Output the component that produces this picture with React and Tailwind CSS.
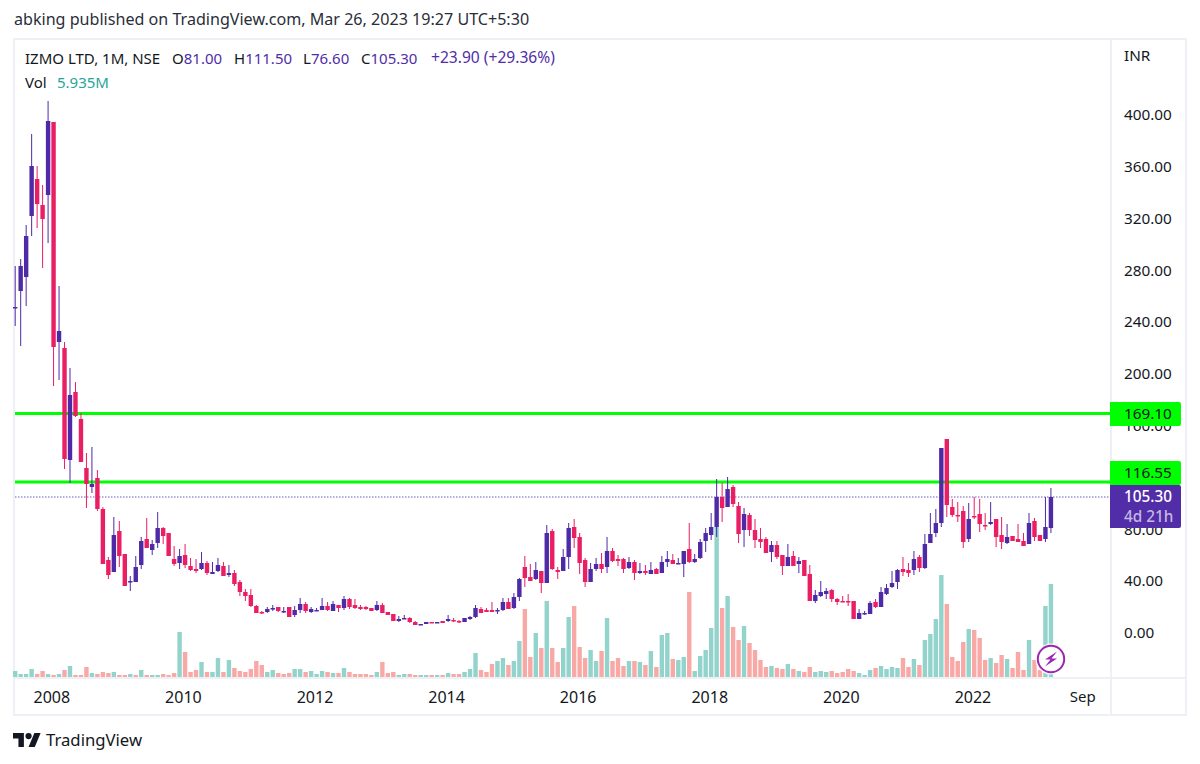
const C = [
[1,266,307,308,326],[1,259,266,291,346],[1,225,236,277,306],[1,134,166,216,236],[0,166,179,204,228],[0,185,205,219,268],[1,101,121,195,243],[0,122,122,347,386],[1,286,331,342,380],[0,342,348,459,469],
[1,368,395,460,483],[0,382,392,416,417],[0,413,419,462,462],[0,453,468,484,508],[1,447,484,487,493],[0,470,478,509,511],[0,507,509,564,564],[0,557,560,575,579],[1,517,535,572,572],[0,521,531,556,567],
[0,554,554,586,586],[1,576,581,582,591],[1,556,567,582,582],[1,537,541,565,569],[0,518,539,548,548],[1,540,544,550,555],[1,512,528,543,548],[0,527,528,536,544],[0,533,533,556,556],[0,546,559,564,566],
[1,549,556,563,569],[0,544,555,565,568],[0,558,566,570,571],[0,559,569,571,573],[1,552,563,569,570],[0,561,563,573,575],[1,562,572,574,574],[1,558,565,571,572],[0,562,566,576,576],[1,565,573,575,577],
[0,570,573,584,586],[0,580,582,592,596],[0,589,592,596,601],[0,589,595,606,607],[0,605,606,613,613],[0,611,612,613,614],[1,607,609,612,613],[1,605,608,609,611],[0,607,607,611,612],[1,607,611,612,613],
[0,607,607,617,617],[1,606,610,615,617],[1,598,604,610,613],[0,602,604,611,613],[1,607,609,612,613],[1,608,610,611,611],[1,598,606,610,610],[0,602,606,610,611],[1,601,604,611,611],[0,605,605,608,612],
[1,596,599,608,610],[0,598,599,607,609],[0,599,605,608,609],[0,605,607,609,610],[0,606,607,609,610],[0,608,608,611,611],[1,601,605,610,611],[0,603,605,613,613],[0,612,612,615,615],[0,614,614,621,621],
[1,616,619,621,622],[1,615,618,619,619],[0,617,618,622,623],[0,621,622,625,625],[1,624,624,625,625],[1,622,622,624,624],[0,622,622,623,623],[1,622,622,623,623],[0,621,621,623,623],[1,615,619,621,622],
[0,618,620,621,622],[0,620,621,622,623],[1,618,618,622,622],[1,616,617,619,620],[1,605,608,617,618],[0,607,609,613,613],[0,608,610,612,612],[0,602,610,612,612],[1,608,610,611,614],[1,598,602,610,611],
[0,598,602,609,609],[1,593,597,608,609],[1,578,579,597,601],[0,556,567,578,587],[0,564,577,581,581],[1,562,570,579,580],[0,571,571,583,593],[1,525,533,583,583],[0,529,531,569,570],[0,567,570,572,579],
[1,549,557,571,571],[1,523,528,557,569],[0,519,527,538,548],[0,533,537,563,574],[0,558,560,582,587],[1,563,569,582,582],[1,558,564,569,571],[0,553,564,569,573],[1,537,551,567,573],[0,548,551,561,562],
[0,555,559,561,566],[0,558,559,569,573],[1,557,562,568,569],[0,560,562,573,580],[1,563,571,573,574],[0,565,571,573,575],[1,562,570,574,574],[0,568,569,574,574],[1,556,562,573,573],[1,551,559,562,567],
[0,554,560,564,564],[1,558,563,564,564],[1,551,551,564,577],[0,523,549,562,563],[1,554,559,562,563],[1,539,542,558,559],[1,528,533,541,552],[1,513,527,535,540],[1,479,497,527,537],[0,483,497,508,522],
[1,477,489,507,507],[0,485,487,504,507],[0,502,506,534,543],[1,508,514,530,547],[0,513,515,530,536],[0,519,530,540,548],[0,528,539,542,548],[0,537,539,553,553],[1,541,545,552,562],[0,541,545,557,559],
[0,555,555,566,575],[1,544,557,566,566],[0,551,556,566,566],[1,557,561,564,573],[0,560,560,576,576],[0,565,574,601,601],[1,590,595,601,603],[1,581,592,596,597],[1,588,591,594,599],[0,589,590,599,602],
[0,598,599,602,605],[0,596,601,602,602],[0,594,601,602,606],[0,601,601,619,619],[1,609,613,619,619],[1,611,613,614,615],[1,601,603,614,614],[0,599,602,607,608],[1,587,592,607,607],[1,584,588,594,595],
[1,571,583,587,588],[1,569,570,582,589],[0,557,569,572,576],[0,563,570,573,577],[1,551,559,570,575],[0,555,557,568,572],[1,534,544,568,569],[1,513,534,543,543],[1,509,523,533,537],[1,448,448,523,527],
[0,439,439,505,517],[0,499,507,515,517],[0,502,515,516,522],[0,506,511,542,548],[1,503,519,539,542],[0,497,516,517,519],[0,499,514,524,532],[0,513,525,526,530],[1,502,522,524,525],[0,519,519,537,547],
[0,517,535,542,549],[1,524,537,543,544],[0,536,536,541,541],[0,524,539,542,542],[0,533,541,546,546],[1,513,523,544,544],[0,518,521,537,541],[0,535,535,541,541],[1,497,527,539,542],[1,488,497,528,533],
];

const V = [
[1,6],[1,3],[1,3],[1,8],[0,3],[0,6],[1,3],[0,2],[1,3],[0,7],[1,11],[0,2],[0,2],[0,10],[1,4],[0,3],[0,5],[0,4],[1,5],[0,2],
[0,2],[1,3],[0,2],[1,7],[0,2],[1,2],[1,2],[0,3],[0,2],[0,4],[1,45],[0,25],[0,5],[0,7],[1,15],[0,5],[1,5],[1,19],[0,5],[1,17],
[0,9],[0,6],[0,5],[0,8],[0,16],[0,12],[1,5],[1,7],[0,4],[0,3],[0,4],[1,8],[1,8],[0,5],[1,6],[1,3],[1,6],[0,5],[1,4],[0,4],
[1,9],[0,5],[0,3],[0,3],[0,3],[0,2],[1,5],[0,15],[0,4],[0,5],[1,2],[1,3],[0,3],[0,2],[1,2],[1,2],[0,2],[1,2],[0,2],[1,4],
[0,3],[0,3],[1,5],[1,8],[1,24],[0,7],[0,5],[0,13],[1,16],[1,19],[0,12],[1,16],[1,36],[0,68],[0,20],[1,44],[0,29],[1,76],[0,29],[0,15],
[1,29],[1,60],[0,71],[0,30],[0,19],[1,27],[1,16],[0,26],[1,59],[0,16],[0,19],[0,11],[1,16],[0,16],[1,15],[0,12],[1,26],[0,10],[1,42],[1,44],
[0,18],[1,17],[1,20],[0,85],[1,6],[1,21],[1,27],[1,49],[1,150],[0,69],[1,81],[0,50],[0,37],[1,51],[0,34],[0,27],[0,17],[0,10],[1,11],[0,9],
[0,8],[1,13],[0,8],[1,6],[0,5],[0,10],[1,5],[1,6],[1,5],[0,6],[0,4],[0,5],[0,8],[0,6],[1,4],[1,2],[1,7],[0,9],[1,11],[1,8],
[1,10],[1,9],[0,19],[0,10],[1,18],[0,12],[1,37],[1,43],[1,58],[1,102],[0,73],[0,20],[0,16],[0,35],[1,48],[0,47],[0,39],[0,17],[1,19],[0,14],
[0,22],[1,18],[0,9],[0,25],[0,7],[1,37],[0,17],[0,7],[1,71],[1,93],
];

const X = (i) => 15.2 + 5.48 * i;
const PRICES = ["400.00", "360.00", "320.00", "280.00", "240.00", "200.00", "160.00", "120.00", "80.00", "40.00", "0.00"];
const YEARS = ["2008", "2010", "2012", "2014", "2016", "2018", "2020", "2022"];

function Chart() {
  return (
    <svg viewBox="15 40 1095 637" className="block w-[1095px] h-[637px] overflow-visible">
      {V.map(([up, h], i) => (
        <rect key={i} x={X(i) - 2.2} y={677 - h} width="4.4" height={h} fill={up ? "#92d3cc" : "#f8a9a6"} />
      ))}
      <line x1="15" x2="1110" y1="497" y2="497" stroke="#512da8" strokeOpacity="0.8" strokeWidth="1" strokeDasharray="1.5 1.5" />
      <line x1="15" x2="1110" y1="413.5" y2="413.5" stroke="#00ff00" strokeWidth="3" />
      <line x1="15" x2="1110" y1="482" y2="482" stroke="#00ff00" strokeWidth="3" />
      {C.map(([up, wt, bt, bb, wb], i) => {
        const c = up ? "#4f2aa6" : "#e91e63";
        const x = X(i);
        return (
          <g key={i} fill={c}>
            <rect x={x - 0.5} y={wt} width="1" height={wb - wt} />
            <rect x={x - 2.2} y={bt} width="4.4" height={Math.max(bb - bt, 1.5)} />
          </g>
        );
      })}
      <circle cx="1051" cy="659" r="15.5" fill="#ffffff" fillOpacity="0.85" />
      <circle cx="1051" cy="659" r="13.2" fill="#ffffff" stroke="#9c27b0" strokeWidth="2" />
      <path d="M1057 651.5 L1045 659.5 L1050.5 659.5 L1045 666.5 L1057 658.5 L1051.5 658.5 Z" fill="#9c27b0" />
    </svg>
  );
}

export default function App() {
  return (
    <div className="w-[1200px] h-[764px] bg-white text-[#131722] overflow-hidden font-['Noto_Sans','DejaVu_Sans',sans-serif]">
      <div className="h-[38px] pl-[14px] flex items-center text-[16.1px] leading-none text-[#2a2e39]">
        abking published on TradingView.com, Mar 26, 2023 19:27 UTC+5:30
      </div>

      <div className="ml-[13px] w-[1174px] h-[678px] border-2 border-[#eef0f6] flex flex-col">
        <div className="flex h-[637px] border-b-2 border-[#eef0f6] box-content">
          <div className="relative w-[1095px]">
            <Chart />
            <div className="absolute left-[10px] top-[8px] flex items-center h-[20px] text-[15px] leading-none">
              <span className="w-[147px]">IZMO LTD, 1M, NSE</span>
              <span className="w-[62px]">O<span className="text-[#512da8]">81.00</span></span>
              <span className="w-[69px]">H<span className="text-[#512da8]">111.50</span></span>
              <span className="w-[58px]">L<span className="text-[#512da8]">76.60</span></span>
              <span className="w-[70px]">C<span className="text-[#512da8]">105.30</span></span>
              <span className="text-[#512da8] text-[15.6px]">+23.90 (+29.36%)</span>
            </div>
            <div className="absolute left-[10px] top-[32px] flex items-center h-[20px] text-[15px] leading-none">
              <span className="w-[32px]">Vol</span>
              <span className="text-[#26a69a]">5.935M</span>
            </div>
          </div>

          <div className="relative w-[76px] border-l-2 border-[#eef0f6] text-[15.3px] leading-none">
            <div className="h-[49px] pl-[12px] pt-[8px]">INR</div>
            {PRICES.map((p) => (
              <div key={p} className="h-[51.8px] pl-[12px] flex items-center">{p}</div>
            ))}
            <div className="absolute left-[-2px] top-[362px] w-[71px] h-[24px] rounded-r-[2px] bg-[#00ff00] pl-[14px] flex items-center">169.10</div>
            <div className="absolute left-[-2px] top-[421px] w-[71px] h-[24px] rounded-r-[2px] bg-[#00ff00] pl-[14px] flex items-center">116.55</div>
            <div className="absolute left-[-2px] top-[445px] w-[71px] h-[43px] rounded-r-[2px] bg-[#512da8] pl-[14px] flex flex-col justify-center gap-[5px] font-medium">
              <span className="text-white">105.30</span>
              <span className="text-[#c5b8e2]">4d 21h</span>
            </div>
          </div>
        </div>

        <div className="flex-1 flex">
          <div className="w-[1095px] flex items-center text-[16px] leading-none">
            <div className="-ml-[29px] flex items-center">
              {YEARS.map((y) => (
                <div key={y} className="w-[131.6px] text-center shrink-0">{y}</div>
              ))}
              <div className="w-[88px] text-center text-[15px]">Sep</div>
            </div>
          </div>
          <div className="w-[76px] border-l-2 border-[#eef0f6]"></div>
        </div>
      </div>

      <div className="h-[48px] pl-[13px] flex items-center gap-[5px]">
        <svg viewBox="0 4 36 18" className="w-[28px] h-[14px]" fill="#131722">
          <path d="M14 22H7V11H0V4h14v18zM28 22h-8l7.5-18h8L28 22z" />
          <circle cx="20" cy="8" r="4" />
        </svg>
        <span className="text-[16.7px] leading-none text-[#131722]">TradingView</span>
      </div>
    </div>
  );
}
